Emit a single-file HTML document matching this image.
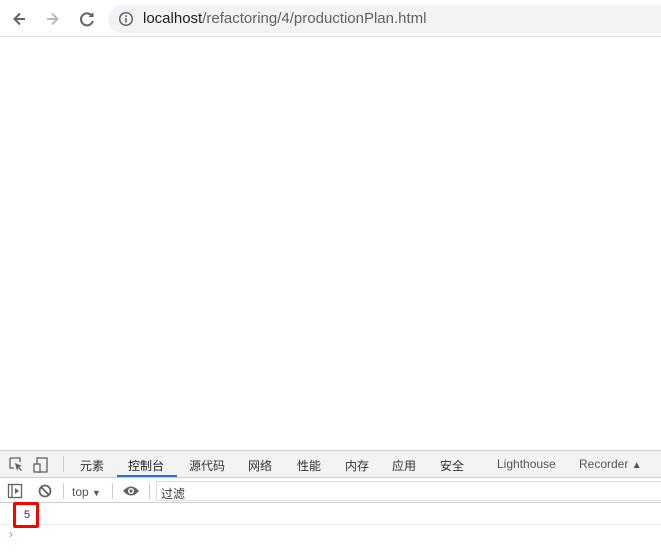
<!DOCTYPE html>
<html><head><meta charset="utf-8"><style>
*{margin:0;padding:0;box-sizing:border-box}
body{width:661px;height:559px;background:#fff;font-family:"Liberation Sans","Noto Sans CJK SC",sans-serif;position:relative;overflow:hidden}
.a{position:absolute}
.tab{position:absolute;top:457px;font-size:12px;color:#333}
</style></head><body>
<div class="a" style="left:0;top:0;width:661px;height:37px;background:#fff;border-bottom:1px solid #dadce0"></div>
<svg class="a" style="left:10px;top:8px" width="90" height="22" viewBox="0 0 90 22">
<path d="M15 11H5M10 5.5L4.5 11l5.5 5.5" stroke="#5f6368" stroke-width="2" fill="none"/>
<path d="M37 11h10M42 5.5l5.5 5.5-5.5 5.5" stroke="#b8babd" stroke-width="2" fill="none"/>
<path d="M82 8a6 6 0 1 0 0.8 5" stroke="#5f6368" stroke-width="2" fill="none"/><path d="M83.5 4v5h-5z" fill="#5f6368"/>
</svg>
<div class="a" style="left:108px;top:5px;width:570px;height:28px;background:#f1f3f4;border-radius:14px"></div>
<svg class="a" style="left:118px;top:11px" width="16" height="16" viewBox="0 0 16 16"><circle cx="8" cy="8" r="6.3" stroke="#5f6368" stroke-width="1.5" fill="none"/><rect x="7.2" y="7" width="1.6" height="4.5" fill="#5f6368"/><rect x="7.2" y="4.3" width="1.6" height="1.6" fill="#5f6368"/></svg>
<div class="a" style="left:143px;top:10px;font-size:15px;color:#202124">localhost<span style="color:#5f6368">/refactoring/4/productionPlan.html</span></div>

<div class="a" style="left:0;top:450px;width:661px;height:28px;background:#f3f3f3;border-top:1px solid #cacdd1;border-bottom:1px solid #cacdd1"></div>
<svg class="a" style="left:8px;top:456px" width="46" height="18" viewBox="0 0 46 18"><path d="M2 2h10v4M2 2v10h4" stroke="#5f6368" stroke-width="1.3" fill="none"/><path d="M7 7l7 3-3 1 3 3-1 1-3-3-1 3z" fill="#5f6368"/><rect x="29" y="2" width="10" height="14" stroke="#5f6368" stroke-width="1.3" fill="none"/><rect x="26" y="8" width="6" height="8" stroke="#5f6368" stroke-width="1.3" fill="#f3f3f3"/></svg>
<div class="a" style="left:63px;top:456px;width:1px;height:16px;background:#ccc"></div>
<div class="tab" style="left:80px">元素</div>
<div class="tab" style="left:128px;color:#202124">控制台</div>
<div class="a" style="left:117px;top:475px;width:60px;height:2px;background:#1a73e8"></div>
<div class="tab" style="left:189px">源代码</div>
<div class="tab" style="left:248px">网络</div>
<div class="tab" style="left:297px">性能</div>
<div class="tab" style="left:345px">内存</div>
<div class="tab" style="left:392px">应用</div>
<div class="tab" style="left:440px">安全</div>
<div class="tab" style="left:497px;color:#555">Lighthouse</div>
<div class="tab" style="left:579px;color:#555">Recorder <span style="font-size:10px">&#9650;</span></div>

<div class="a" style="left:0;top:479px;width:661px;height:24px;background:#fff;border-bottom:1px solid #cacdd1"></div>
<svg class="a" style="left:7px;top:483px" width="50" height="16" viewBox="0 0 50 16"><rect x="1.5" y="1.5" width="13" height="13" stroke="#5f6368" stroke-width="1.3" fill="none"/><path d="M5 1.5v13" stroke="#5f6368" stroke-width="1.3"/><path d="M8 5l4 3-4 3z" fill="#5f6368"/><circle cx="38" cy="8" r="5.5" stroke="#5f6368" stroke-width="1.8" fill="none"/><path d="M34 4l8 8" stroke="#5f6368" stroke-width="1.8"/></svg>
<div class="a" style="left:63px;top:483px;width:1px;height:16px;background:#ccc"></div>
<div class="a" style="left:72px;top:485px;font-size:12px;color:#555">top <span style="font-size:9px">&#9660;</span></div>
<div class="a" style="left:112px;top:483px;width:1px;height:16px;background:#ccc"></div>
<svg class="a" style="left:122px;top:484px" width="18" height="14" viewBox="0 0 18 14"><path d="M1 7Q9 -2 17 7Q9 16 1 7z" fill="#5f6368"/><circle cx="9" cy="7" r="3" fill="#fff"/><circle cx="9" cy="7" r="1.6" fill="#5f6368"/></svg>
<div class="a" style="left:149px;top:483px;width:1px;height:16px;background:#ccc"></div>
<div class="a" style="left:156px;top:481px;width:510px;height:20px;border:1px solid #ddd;background:#fff"></div>
<div class="a" style="left:161px;top:485px;font-size:12px;color:#333">过滤</div>

<div class="a" style="left:0;top:524px;width:661px;height:1px;background:#eee"></div>
<div class="a" style="left:13px;top:502px;width:26px;height:26px;border:3px solid #f00;border-radius:2px;background:#fff"></div>
<div class="a" style="left:24px;top:509px;font-size:11px;color:#1a1aa6">5</div>
<div class="a" style="left:9px;top:527px;font-size:12px;color:#5b9bf0">›</div>
</body></html>
